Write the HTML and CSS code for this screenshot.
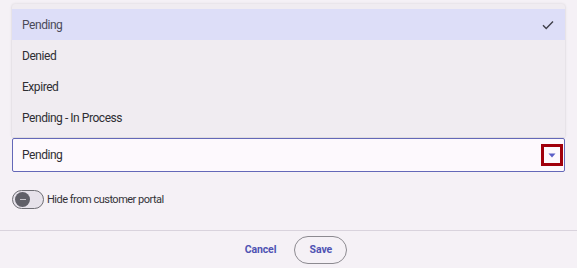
FILE: index.html
```html
<!DOCTYPE html>
<html>
<head>
<meta charset="utf-8">
<link rel="stylesheet" href="styles.css">
</head>
<body>
<div class="dialog">
  <div class="menu">
    <div class="item selected"><span>Pending</span>
      <svg class="check" width="12" height="10" viewBox="0 0 12 10"><path d="M1 5.2 L4.2 8.4 L11 1.4" fill="none" stroke="#3f3f4a" stroke-width="1.4"/></svg>
    </div>
    <div class="item">Denied</div>
    <div class="item">Expired</div>
    <div class="item">Pending - In Process</div>
  </div>
  <div class="select">
    <span class="value">Pending</span>
    <span class="arrowbox"><svg width="8" height="5" viewBox="0 0 8 5"><path d="M0.5 0.5 L7.5 0.5 L4 4.5 Z" fill="#5b5fc7"/></svg></span>
  </div>
  <div class="toggle-row">
    <span class="toggle"><span class="knob"></span></span>
    <span class="toggle-label">Hide from customer portal</span>
  </div>
  <div class="footer">
    <button class="btn link">Cancel</button>
    <button class="btn outline">Save</button>
  </div>
</div>
</body>
</html>
```
FILE: styles.css
```css
html, body {
  margin: 0;
  padding: 0;
}
body {
  background: #f5f1f6;
  font-family: Roboto, "Open Sans", sans-serif;
  color: #2e2e33;
  width: 577px;
  height: 268px;
  overflow: hidden;
}
.dialog {
  height: 268px;
  display: flex;
  flex-direction: column;
}
.menu {
  margin: 4px 12px 0 12px;
  background: #f0ecf1;
  padding: 5px 0 4px 0;
  box-shadow: 0 0 3px rgba(0,0,0,0.12), 0 1px 2px rgba(0,0,0,0.06);
  border-radius: 3px 3px 0 0;
}
.item {
  height: 31px;
  display: flex;
  align-items: center;
  justify-content: space-between;
  padding: 0 11px 0 10px;
  font-size: 12px;
  letter-spacing: -0.45px;
}
.item.selected {
  background: #dddef8;
  color: #4a4a58;
}
.select {
  margin: 1px 12px 0 12px;
  height: 32px;
  border: 1.5px solid #6468b8;
  border-radius: 2px;
  background: #fdf9fd;
  display: flex;
  align-items: center;
  justify-content: space-between;
  padding: 0 1px 0 9px;
}
.value {
  font-size: 12px;
  letter-spacing: -0.45px;
  color: #2e2e33;
}
.arrowbox {
  width: 16px;
  height: 16px;
  border: 3px solid #a1000c;
  display: flex;
  align-items: center;
  justify-content: center;
}
.toggle-row {
  margin: 18px 12px 0 12px;
  display: flex;
  align-items: center;
  gap: 3px;
}
.toggle {
  width: 28px;
  height: 17px;
  border: 1.5px solid #6e6e74;
  border-radius: 10px;
  background: #e6e2ea;
  display: flex;
  align-items: center;
  padding-left: 2px;
}
.knob {
  width: 15px;
  height: 15px;
  border-radius: 50%;
  background: #606068;
  position: relative;
}
.knob::after {
  content: "";
  position: absolute;
  left: 4.5px;
  top: 7px;
  width: 6px;
  height: 1px;
  background: #c8c6cc;
}
.toggle-label {
  font-size: 11px;
  letter-spacing: -0.5px;
  color: #333338;
}
.footer {
  margin-top: auto;
  border-top: 1px solid #d9d3dd;
  height: 37px;
  display: flex;
  align-items: center;
  justify-content: center;
  padding-left: 15px;
  gap: 18px;
}
.btn {
  font-family: Roboto, "Open Sans", sans-serif;
  font-size: 10.5px;
  font-weight: 700;
  letter-spacing: -0.1px;
  color: #4f53b3;
  background: transparent;
  cursor: pointer;
}
.btn.link {
  border: none;
  padding: 0;
}
.btn.outline {
  width: 53px;
  height: 28px;
  border: 1px solid #8c8a90;
  border-radius: 14px;
  padding: 0;
}
```
